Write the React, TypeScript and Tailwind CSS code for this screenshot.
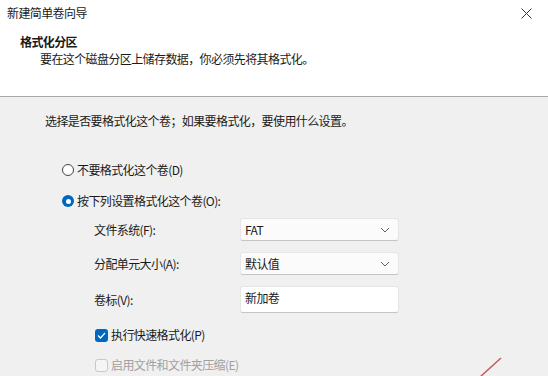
import React from "react";

const font = { fontFamily: '"Noto Sans CJK SC", "Noto Sans", sans-serif' };

function Chevron() {
  return (
    <svg width="10" height="6" viewBox="0 0 10 6" className="text-[#606060]">
      <path d="M1 1 L5 5 L9 1" fill="none" stroke="currentColor" strokeWidth="1" />
    </svg>
  );
}

function Select({ value }: { value: string }) {
  return (
    <div className="w-[159px] h-[23px] bg-[#fbfbfb] border border-[#e5e5e5] border-b-[#c4c4c4] rounded-[3px] flex items-center justify-between pl-[4px] pr-[8px]">
      <span className="text-[12px] text-[#1a1a1a]">{value}</span>
      <Chevron />
    </div>
  );
}

export default function App() {
  return (
    <div className="w-[548px] h-[376px] overflow-hidden bg-[#f0f0f0] text-[#1a1a1a] relative tracking-[-0.6px]" style={font}>
      <div className="bg-white h-[97px] border-b border-[#a8a8a8] flex flex-col">
        <div className="flex items-center justify-between h-[24px] pl-[7px] pr-[16px] pt-[2px]">
          <span className="text-[12px] text-[#1a1a1a]">新建简单卷向导</span>
          <svg width="11" height="11" viewBox="0 0 11 11">
            <path d="M0.5 0.5 L10.5 10.5 M10.5 0.5 L0.5 10.5" stroke="#333" strokeWidth="1" />
          </svg>
        </div>
        <div className="pl-[20px] pt-[9px] text-[12px] font-bold leading-[18px]">格式化分区</div>
        <div className="pl-[40px] text-[12px] leading-[16px]">要在这个磁盘分区上储存数据，你必须先将其格式化。</div>
      </div>
      <div className="pl-[45px] pt-[15px] text-[12px] leading-[18px]">选择是否要格式化这个卷；如果要格式化，要使用什么设置。</div>
      <div className="pl-[62px] pt-[31px] flex flex-col">
        <label className="flex items-center gap-[3px] h-[18px] text-[12px]">
          <span className="w-[12px] h-[12px] rounded-full border border-[#444] bg-white" />
          不要格式化这个卷(D)
        </label>
        <label className="flex items-center gap-[3px] h-[18px] mt-[13px] text-[12px]">
          <span className="w-[12px] h-[12px] rounded-full bg-[#0067c0] flex items-center justify-center">
            <span className="w-[5px] h-[5px] rounded-full bg-white" />
          </span>
          按下列设置格式化这个卷(O):
        </label>
        <div className="pl-[32px] mt-[8px] grid grid-cols-[146px_159px] gap-y-[11px] items-center text-[12px]">
          <span>文件系统(F):</span>
          <Select value="FAT" />
          <span>分配单元大小(A):</span>
          <Select value="默认值" />
          <span className="self-start pt-[5px]">卷标(V):</span>
          <div className="h-[27px] bg-white border border-[#e5e5e5] border-b-[#c4c4c4] rounded-[3px] pl-[4px] pt-[2px] text-[12px]">新加卷</div>
        </div>
        <label className="pl-[33px] mt-[13px] flex items-center gap-[3px] h-[18px] text-[12px]">
          <span className="w-[13px] h-[13px] rounded-[3px] bg-[#0067c0] flex items-center justify-center">
            <svg width="9" height="7" viewBox="0 0 9 7">
              <path d="M1 3.5 L3.4 6 L8 1" fill="none" stroke="white" strokeWidth="1.2" />
            </svg>
          </span>
          执行快速格式化(P)
        </label>
        <label className="pl-[33px] mt-[12px] flex items-center gap-[3px] h-[18px] text-[12px] text-[#a0a0a0]">
          <span className="w-[13px] h-[13px] rounded-[3px] border border-[#c8c8c8] bg-[#f5f5f5]" />
          启用文件和文件夹压缩(E)
        </label>
      </div>
      <svg className="absolute left-[478px] top-[356px]" width="26" height="22" viewBox="0 0 26 22">
        <path d="M23 2 L2 21" stroke="#c0404a" strokeWidth="1.5" opacity="0.85" />
      </svg>
    </div>
  );
}
